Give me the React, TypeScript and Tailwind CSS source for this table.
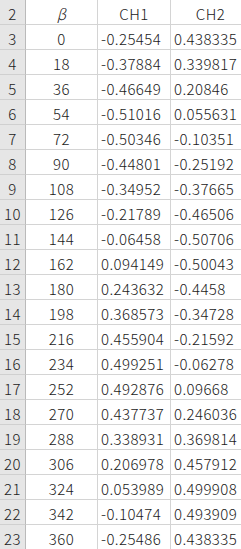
const rows: [number, string, string][] = [
  [0, "-0.25454", "0.438335"],
  [18, "-0.37884", "0.339817"],
  [36, "-0.46649", "0.20846"],
  [54, "-0.51016", "0.055631"],
  [72, "-0.50346", "-0.10351"],
  [90, "-0.44801", "-0.25192"],
  [108, "-0.34952", "-0.37665"],
  [126, "-0.21789", "-0.46506"],
  [144, "-0.06458", "-0.50706"],
  [162, "0.094149", "-0.50043"],
  [180, "0.243632", "-0.4458"],
  [198, "0.368573", "-0.34728"],
  [216, "0.455904", "-0.21592"],
  [234, "0.499251", "-0.06278"],
  [252, "0.492876", "0.09668"],
  [270, "0.437737", "0.246036"],
  [288, "0.338931", "0.369814"],
  [306, "0.206978", "0.457912"],
  [324, "0.053989", "0.499908"],
  [342, "-0.10474", "0.493909"],
  [360, "-0.25486", "0.438335"],
];

const head = "h-[25px] flex items-center justify-center pt-[2px] bg-[#e6e6e6] border-r border-b border-r-[#bababa] border-b-[#d0d0d0] text-[#222]";
const cell = "h-[25px] flex items-center pt-[2px] border-r border-b border-[#d4d4d4] text-[#1a1a1a] overflow-hidden whitespace-nowrap";

export default function App() {
  return (
    <div
      className="w-[241px] h-[549px] overflow-hidden bg-white text-[15px] leading-none font-light tracking-[0.4px]"
      style={{ fontFamily: '"Noto Sans CJK JP", "Noto Sans", sans-serif' }}
    >
      <div className="grid grid-cols-[26px_72px_73px_80px]">
        <div className={head}>2</div>
        <div className={cell + " justify-center italic"}>β</div>
        <div className={cell + " justify-center"}>CH1</div>
        <div className={cell + " justify-center"}>CH2</div>
        {rows.map(([b, c1, c2], i) => (
          <div key={b} className="contents">
            <div className={head}>{i + 3}</div>
            <div className={cell + " justify-center"}>{b}</div>
            <div className={cell + " pl-[3px]"}>{c1}</div>
            <div className={cell + " pl-[3px]"}>{c2}</div>
          </div>
        ))}
      </div>
    </div>
  );
}
